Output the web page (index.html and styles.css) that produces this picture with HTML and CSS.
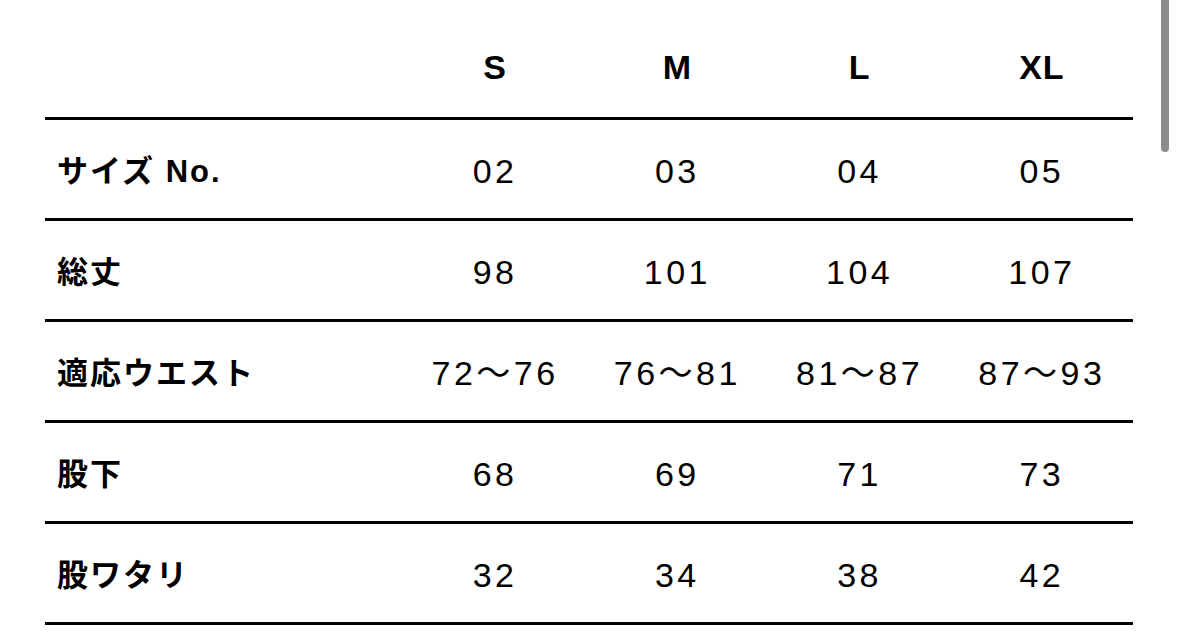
FILE: index.html
```html
<!DOCTYPE html>
<html lang="ja">
<head>
<meta charset="utf-8">
<link rel="stylesheet" href="styles.css">
</head>
<body>
<div class="page">
  <div class="size-table">
    <div class="row head">
      <div class="cell label"></div>
      <div class="cell size">S</div>
      <div class="cell size">M</div>
      <div class="cell size">L</div>
      <div class="cell size">XL</div>
    </div>
    <div class="row">
      <div class="cell label">サイズ No.</div>
      <div class="cell val">02</div>
      <div class="cell val">03</div>
      <div class="cell val">04</div>
      <div class="cell val">05</div>
    </div>
    <div class="row">
      <div class="cell label">総丈</div>
      <div class="cell val">98</div>
      <div class="cell val">101</div>
      <div class="cell val">104</div>
      <div class="cell val">107</div>
    </div>
    <div class="row">
      <div class="cell label">適応ウエスト</div>
      <div class="cell val">72〜76</div>
      <div class="cell val">76〜81</div>
      <div class="cell val">81〜87</div>
      <div class="cell val">87〜93</div>
    </div>
    <div class="row">
      <div class="cell label">股下</div>
      <div class="cell val">68</div>
      <div class="cell val">69</div>
      <div class="cell val">71</div>
      <div class="cell val">73</div>
    </div>
    <div class="row last">
      <div class="cell label">股ワタリ</div>
      <div class="cell val">32</div>
      <div class="cell val">34</div>
      <div class="cell val">38</div>
      <div class="cell val">42</div>
    </div>
  </div>
  <div class="scrollbar"></div>
</div>
</body>
</html>
```

FILE: styles.css
```css
html, body {
  margin: 0;
  padding: 0;
  background: #ffffff;
}

body {
  font-family: "Liberation Sans", "Noto Sans CJK JP", sans-serif;
  color: #000000;
  overflow: hidden;
}

.page {
  position: relative;
  width: 1179px;
  height: 640px;
}

.size-table {
  margin-left: 45px;
  width: 1088px;
  display: flex;
  flex-direction: column;
}

.row {
  display: grid;
  grid-template-columns: 359px repeat(4, 1fr);
  align-items: center;
  height: 98px;
  border-top: 3px solid #000000;
}

.row.head {
  border-top: none;
  height: 117px;
  align-items: end;
}

.row.last {
  border-bottom: 3px solid #000000;
}

.cell {
  line-height: 1;
}

.label {
  padding-left: 12px;
  padding-top: 4px;
  font-size: 31px;
  font-weight: 700;
  letter-spacing: 2px;
  white-space: nowrap;
}

.head .label {
  padding-top: 0;
}

.size {
  text-align: center;
  font-size: 34px;
  font-weight: 700;
  padding-bottom: 33px;
  letter-spacing: 1px;
}

.val {
  text-align: center;
  padding-top: 4px;
  font-size: 34px;
  font-weight: 400;
  letter-spacing: 3.5px;
  white-space: nowrap;
}

.scrollbar {
  position: absolute;
  left: 1161px;
  top: -6px;
  width: 8px;
  height: 158px;
  background: #8b8b8b;
  border-radius: 4px;
}
```
